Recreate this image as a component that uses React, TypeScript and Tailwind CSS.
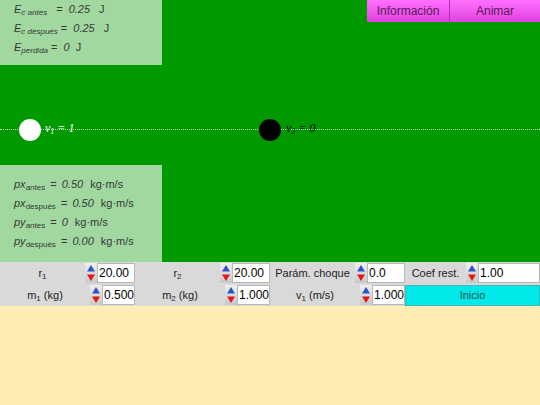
import React from "react";

const Spin = () => (
  <div className="flex flex-col w-[12px] h-[20px] bg-gradient-to-b from-[#f0f0f0] to-[#c8c8c8]">
    <svg width="12" height="10" viewBox="0 0 12 10" className="block">
      <polygon points="2,8.5 10,8.5 6,2" fill="#2a56c8" />
    </svg>
    <svg width="12" height="10" viewBox="0 0 12 10" className="block">
      <polygon points="2,1.5 10,1.5 6,8" fill="#e01818" />
    </svg>
  </div>
);

const Field = ({ v, w }: { v: string; w: string }) => (
  <div className={`${w} h-[20px] bg-white border border-[#b8b8b8] flex items-center pl-[1px] text-[12px] text-black`}>
    {v}
  </div>
);

const Sub = ({ children }: { children: React.ReactNode }) => (
  <sub className="text-[8px] relative top-[2px] align-baseline">{children}</sub>
);

export default function App() {
  const sans = { fontFamily: '"Liberation Sans", Arial, sans-serif' };
  const serif = { fontFamily: '"Liberation Serif", "Times New Roman", serif' };
  return (
    <div className="w-[540px] h-[405px] bg-[#ffedb5] overflow-hidden" style={sans}>
      <div className="relative w-[540px] h-[262px] bg-[#009900] flex flex-col justify-between">
        <div className="absolute left-0 right-0 top-[129px] border-t border-dotted border-[#c8e8c8]" />
        <div className="absolute left-[19px] top-[119px] w-[22px] h-[22px] rounded-full bg-white" />
        <div className="absolute left-[259px] top-[119px] w-[22px] h-[22px] rounded-full bg-black" />
        <div className="absolute left-[45px] top-[119px] text-[12px] italic text-white" style={serif}>
          v<sub className="text-[8px]">1</sub> = 1
        </div>
        <div className="absolute left-[286px] top-[119px] text-[12px] italic text-black" style={serif}>
          v<sub className="text-[8px]">2</sub> = 0
        </div>

        <div className="relative flex justify-between items-start">
          <div className="w-[162px] h-[65px] bg-[#a0d8a0] text-[11px] text-[#383838] pl-[14px] pt-[1px] flex flex-col gap-[3px]">
            <div className="h-[16px]">
              <i>E</i><Sub><i>c antes</i></Sub>
              <span className="ml-[9px]">=</span> <i className="ml-[3px]">0.25</i>
              <span className="ml-[9px]">J</span>
            </div>
            <div className="h-[16px]">
              <i>E</i><Sub><i>c después</i></Sub>
              <span className="ml-[3px]">=</span> <i className="ml-[3px]">0.25</i>
              <span className="ml-[9px]">J</span>
            </div>
            <div className="h-[16px]">
              <i>E</i><Sub><i>perdida</i></Sub>
              <span className="ml-[3px]">=</span> <i className="ml-[3px]">0</i>
              <span className="ml-[6px]">J</span>
            </div>
          </div>
          <div className="flex h-[22px] text-[12px] text-[#5a1a5a]">
            <div className="w-[83px] h-full flex items-center justify-center bg-gradient-to-b from-[#ff70ff] to-[#e040e0] border-r border-[#b030b0]">
              Información
            </div>
            <div className="w-[90px] h-full flex items-center justify-center bg-gradient-to-b from-[#ff70ff] to-[#e040e0]">
              Animar
            </div>
          </div>
        </div>

        <div className="relative w-[162px] h-[97px] bg-[#a0d8a0] text-[11px] text-[#383838] pl-[14px] pt-[11px] flex flex-col gap-[3px]">
          <div className="h-[16px]">
            <i>px</i><Sub>antes</Sub>
            <span className="ml-[5px]">=</span> <i className="ml-[2px]">0.50</i>
            <span className="ml-[7px]">kg·m/s</span>
          </div>
          <div className="h-[16px]">
            <i>px</i><Sub>después</Sub>
            <span className="ml-[5px]">=</span> <i className="ml-[2px]">0.50</i>
            <span className="ml-[7px]">kg·m/s</span>
          </div>
          <div className="h-[16px]">
            <i>py</i><Sub>antes</Sub>
            <span className="ml-[5px]">=</span> <i className="ml-[2px]">0</i>
            <span className="ml-[7px]">kg·m/s</span>
          </div>
          <div className="h-[16px]">
            <i>py</i><Sub>después</Sub>
            <span className="ml-[5px]">=</span> <i className="ml-[2px]">0.00</i>
            <span className="ml-[7px]">kg·m/s</span>
          </div>
        </div>
      </div>

      <div className="w-[540px] h-[44px] bg-[#d9d9d9] text-[11px] text-[#222] flex flex-col pt-[1px] gap-[2px]">
        <div className="flex items-center h-[20px]">
          <div className="w-[85px] text-center">r<sub className="text-[8px]">1</sub></div>
          <Spin />
          <Field v="20.00" w="w-[38px]" />
          <div className="w-[85px] text-center">r<sub className="text-[8px]">2</sub></div>
          <Spin />
          <Field v="20.00" w="w-[38px]" />
          <div className="w-[85px] text-center">Parám. choque</div>
          <Spin />
          <Field v="0.0" w="w-[38px]" />
          <div className="w-[61px] text-center">Coef rest.</div>
          <Spin />
          <Field v="1.00" w="w-[62px]" />
        </div>
        <div className="flex items-center h-[20px]">
          <div className="w-[90px] text-center">m<sub className="text-[8px]">1</sub> (kg)</div>
          <Spin />
          <Field v="0.500" w="w-[33px]" />
          <div className="w-[90px] text-center">m<sub className="text-[8px]">2</sub> (kg)</div>
          <Spin />
          <Field v="1.000" w="w-[33px]" />
          <div className="w-[90px] text-center">v<sub className="text-[8px]">1</sub> (m/s)</div>
          <Spin />
          <Field v="1.000" w="w-[33px]" />
          <div className="w-[135px] h-[21px] flex items-center justify-center bg-[#00e8e8] border border-[#40b8b8] text-[#205050]">
            Inicio
          </div>
        </div>
      </div>
    </div>
  );
}
